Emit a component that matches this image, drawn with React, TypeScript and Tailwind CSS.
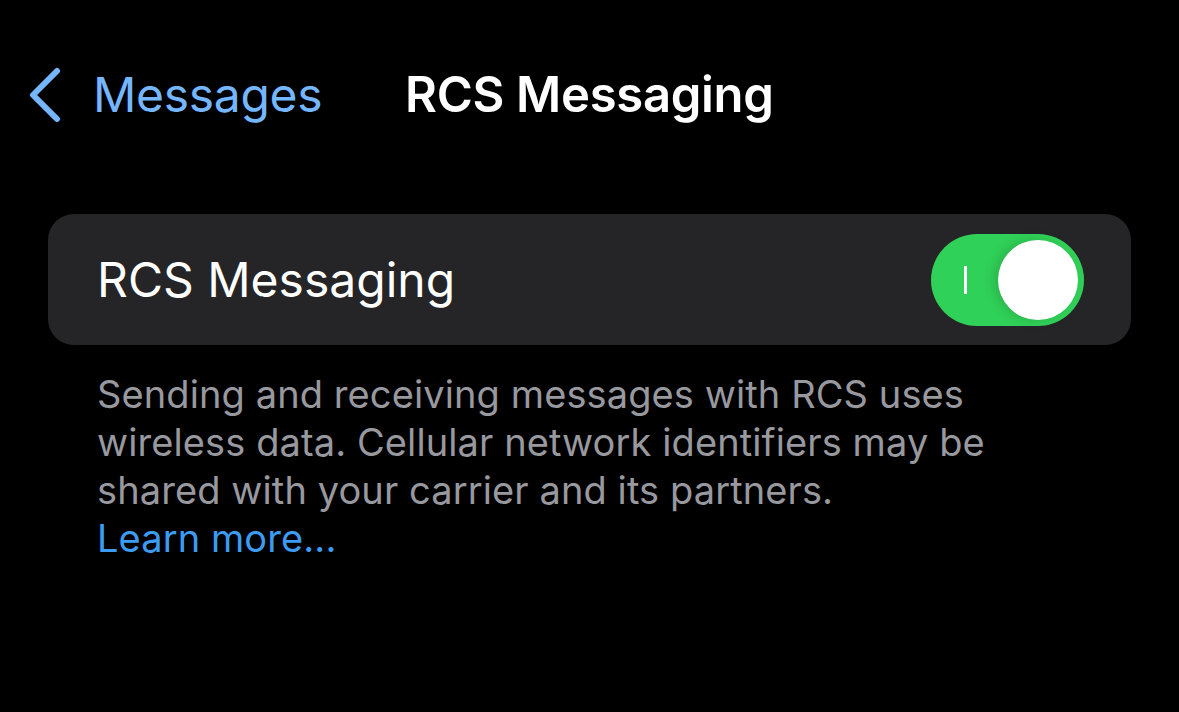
import React from "react";

export default function App() {
  return (
    <div className="w-[1179px] h-[712px] bg-black overflow-hidden" style={{ fontFamily: "Inter, 'Noto Sans', sans-serif" }}>
      <div className="flex items-center h-[96px] mt-[47px] pl-[28px]">
        <svg width="34" height="56" viewBox="0 0 34 56" className="shrink-0">
          <path d="M29 4 L5 28 L29 52" fill="none" stroke="#74b6ff" strokeWidth="6" strokeLinecap="round" strokeLinejoin="round" />
        </svg>
        <span className="ml-[31px] w-[227px] text-[48px] text-[#74b6ff] tracking-[-0.3px] whitespace-nowrap">Messages</span>
        <span className="ml-[85px] text-[49px] text-white font-semibold tracking-[-0.3px] whitespace-nowrap">RCS Messaging</span>
      </div>
      <div className="mx-[48px] mt-[71px] h-[131px] rounded-[26px] bg-[#252527] flex items-center justify-between pl-[49px] pr-[47px]">
        <span className="text-[48px] text-white tracking-[0px]">RCS Messaging</span>
        <div className="relative w-[153px] h-[92px] rounded-full bg-[#30d158] flex items-center">
          <div className="absolute left-[33px] top-[32px] w-[3px] h-[28px] bg-white" />
          <div className="absolute right-[6px] top-[6px] w-[80px] h-[80px] rounded-full bg-white shadow-[-4px_0_12px_rgba(0,0,0,0.15)]" />
        </div>
      </div>
      <div className="ml-[97px] mr-[40px] mt-[25px] text-[38px] leading-[48px] text-[#98989f] tracking-[0.1px] whitespace-nowrap">
        <div>Sending and receiving messages with RCS uses</div>
        <div>wireless data. Cellular network identifiers may be</div>
        <div>shared with your carrier and its partners.</div>
        <div className="text-[#3b9cf2]">Learn more...</div>
      </div>
    </div>
  );
}
